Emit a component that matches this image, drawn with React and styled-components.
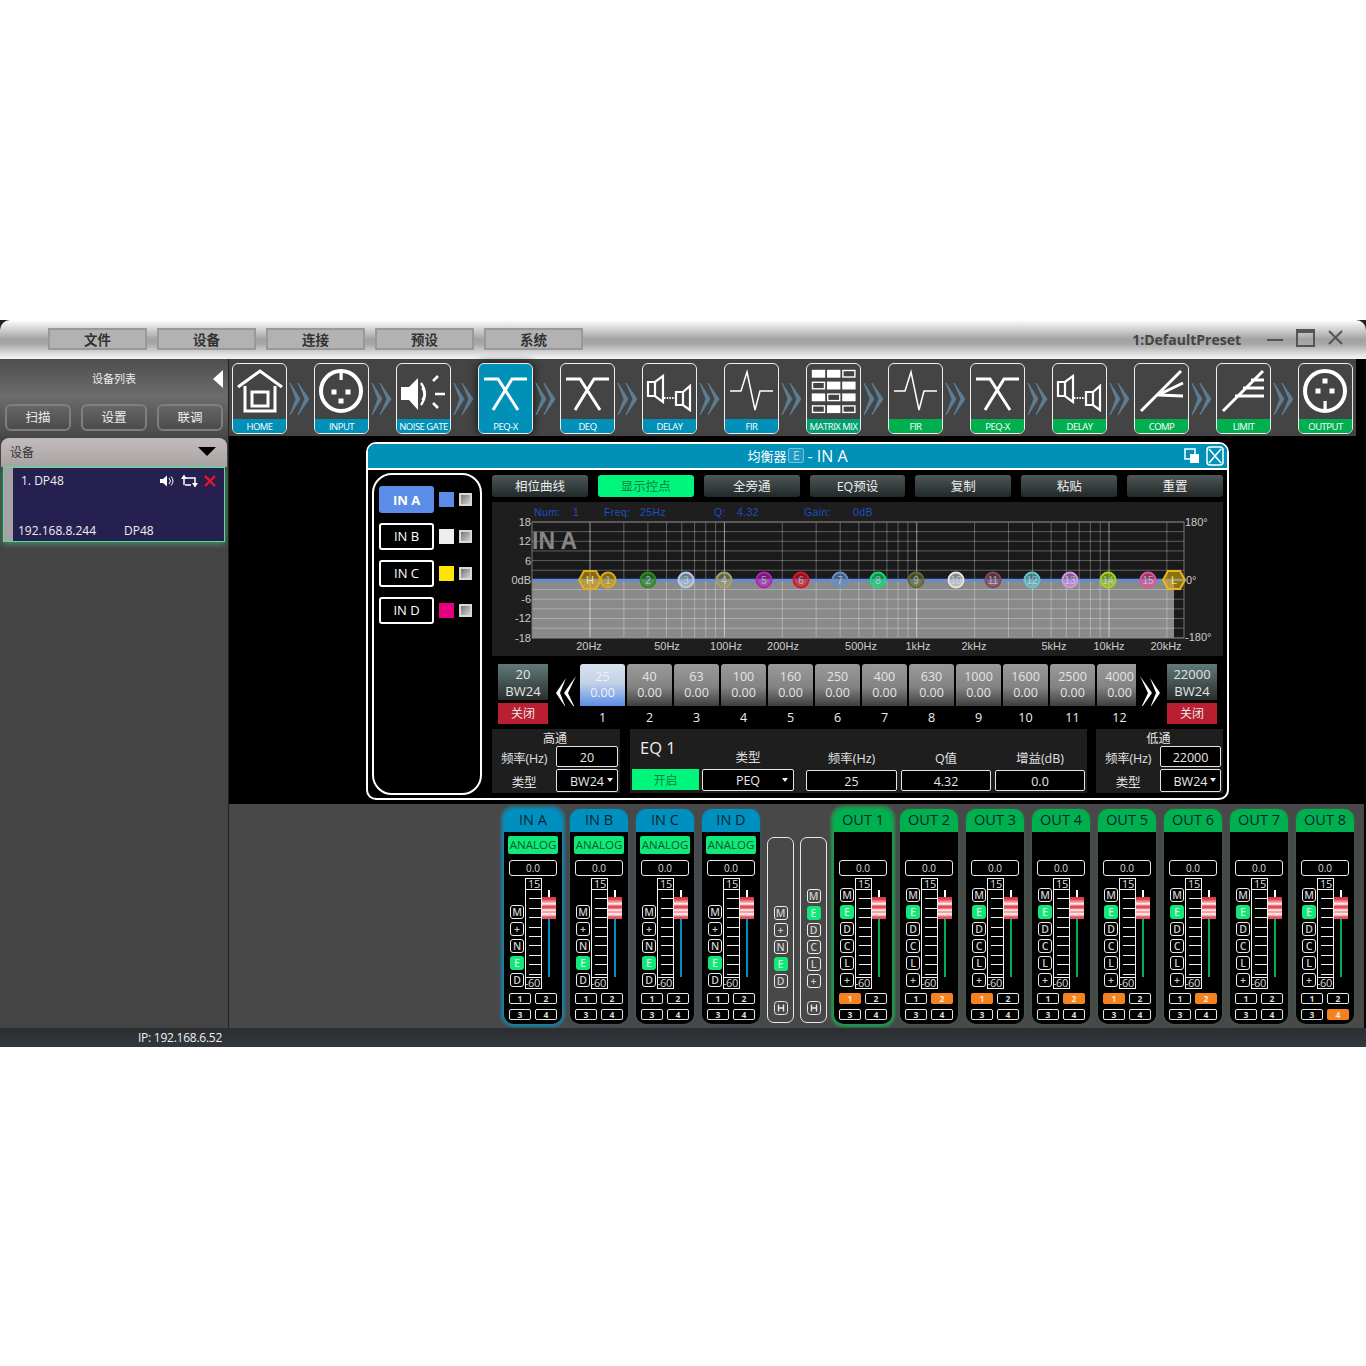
import React from 'react'
import styled, { createGlobalStyle } from 'styled-components'

const FONT = `"Open Sans", "Noto Sans CJK SC", sans-serif`
const BLUE = '#0090b8'
const GREEN = '#00b04f'

const GlobalStyle = createGlobalStyle`
    html, body { margin: 0; padding: 0; background: #fff; }
    body { font-family: ${FONT}; }
    * { box-sizing: border-box; }
`

const Page = styled.div`
    width: 1366px;
    height: 1366px;
    padding-top: 320px;
    background: #fff;
    overflow: hidden;
`
const Window = styled.div`
    width: 1366px;
    height: 727px;
    background: #222;
    display: flex;
    flex-direction: column;
`

/* title bar */
const TitleBar = styled.div`
    height: 39px;
    flex: none;
    display: flex;
    align-items: center;
    padding: 0 0 1px 48px;
    gap: 10px;
    border-radius: 10px 10px 0 0;
    background: linear-gradient(#fff 0%, #e8e8e8 12%, #a2a2a2 50%, #a8a8a8 62%, #e4e4e4 90%, #f4f4f4 100%);
`
const MenuButton = styled.div`
    width: 99px;
    height: 22px;
    border: 2px solid #999;
    background: #b2b2b2;
    color: #333;
    font-size: 13.5px;
    font-weight: 700;
    line-height: 20px;
    text-align: center;
`
const PresetName = styled.div`
    margin-left: auto;
    font-size: 14px;
    font-weight: 700;
    color: #444;
`
const WindowControls = styled.svg`
    width: 98px;
    height: 24px;
    margin-left: 16px;
    margin-right: 1px;
    flex: none;
`

const Body = styled.div`
    flex: 1;
    display: flex;
    min-height: 0;
`

/* left device list */
const Sidebar = styled.div`
    width: 228px;
    flex: none;
    background: #444;
    display: flex;
    flex-direction: column;
`
const SideHeader = styled.div`
    height: 39px;
    flex: none;
    display: flex;
    align-items: center;
    justify-content: center;
    position: relative;
    color: #eee;
    font-size: 11px;
    padding-bottom: 1px;
    background: linear-gradient(#4e4e4e, #6e6e6e);
`
const CollapseArrow = styled.div`
    position: absolute;
    right: 5px;
    top: 11px;
    border-style: solid;
    border-width: 9px 10px 9px 0;
    border-color: transparent #fff transparent transparent;
`
const SideButtons = styled.div`
    height: 39px;
    flex: none;
    display: flex;
    gap: 10px;
    padding: 6px 0 0 5px;
    background: linear-gradient(#6a6a6a, #484848);
`
const SideButton = styled.div`
    width: 66px;
    height: 27px;
    border: 2px solid #7e7e7e;
    border-radius: 6px;
    background: linear-gradient(#666, #4c4c4c);
    color: #eee;
    font-size: 12.5px;
    line-height: 24px;
    text-align: center;
`
const GroupHeader = styled.div`
    height: 29px;
    margin: 1px 1px 0;
    flex: none;
    display: flex;
    align-items: center;
    justify-content: space-between;
    padding: 0 11px 2px 9px;
    border-radius: 8px 8px 0 0;
    background: linear-gradient(#c2bcbc, #a8a2a2);
    color: #333;
    font-size: 12px;
`
const DownArrow = styled.div`
    border-style: solid;
    border-width: 9px 9px 0 9px;
    border-color: #000 transparent transparent transparent;
`
const DeviceCard = styled.div`
    height: 75px;
    margin: 0 3px;
    display: flex;
    border: 1px solid #4fe09a;
    box-shadow: 0 2px 6px rgba(90, 230, 160, 0.45);
`
const DeviceStrip = styled.div`
    width: 9px;
    flex: none;
    background: #a4a4a4;
`
const DeviceInfo = styled.div`
    flex: 1;
    background: #262050;
    color: #eee;
    font-size: 12px;
    display: flex;
    flex-direction: column;
    justify-content: space-between;
    padding: 4px 8px 2px 5px;
`
const DeviceTop = styled.div`
    display: flex;
    align-items: center;
    justify-content: space-between;
    padding-left: 3px;
`
const DeviceBottom = styled.div`
    display: flex;
    gap: 28px;
`

/* right side */
const Main = styled.div`
    flex: 1;
    min-width: 0;
    background: #000;
    display: flex;
    flex-direction: column;
    border-left: 1px solid #222;
    margin-left: 0;
`
const Toolbar = styled.div`
    width: 1127px;
    height: 77px;
    flex: none;
    background: #444;
    display: flex;
    padding: 4px 0 0 3px;
`
const Tile = styled.div`
    width: 55px;
    height: 71px;
    flex: none;
    display: flex;
    flex-direction: column;
    border: 1px solid #eee;
    border-radius: 6px;
    overflow: hidden;
    background: ${p => (p.$active ? BLUE : 'transparent')};
    box-shadow: ${p => (p.$active ? '0 0 8px #111' : 'none')};
`
const TileIcon = styled.svg`
    width: 55px;
    height: 55px;
    margin: -1px 0 0 -1px;
    flex: none;
`
const TileLabel = styled.div`
    height: 15px;
    margin-top: 1px;
    background: ${p => p.$color};
    color: #fff;
    font-size: 9.5px;
    letter-spacing: -0.5px;
    line-height: 15px;
    text-align: center;
    white-space: nowrap;
    overflow: hidden;
`
const ChevronBox = styled.svg`
    width: 27px;
    height: 71px;
    flex: none;
`

const Workspace = styled.div`
    height: 368px;
    flex: none;
    padding: 6px 0 0 137px;
`
const Dialog = styled.div`
    width: 863px;
    height: 358px;
    border: 2px solid #fff;
    border-radius: 10px;
    background: #000;
    display: flex;
    flex-direction: column;
    overflow: hidden;
`
const DialogTitle = styled.div`
    height: 26px;
    flex: none;
    border-bottom: 2px solid #fff;
    background: ${BLUE};
    display: flex;
    align-items: center;
    justify-content: center;
    position: relative;
    color: #fff;
    font-size: 16px;
    line-height: 22px;
    padding-bottom: 1px;
`
const DialogCn = styled.span`
    font-size: 13px;
`
const EBadge = styled.span`
    width: 16px;
    height: 15px;
    margin: 0 3px 0 2px;
    border: 1px solid #6cc4de;
    border-radius: 2px;
    background: #1c9cc0;
    color: #a8e0f0;
    font-size: 12px;
    line-height: 13px;
    text-align: center;
`
const DialogIcons = styled.svg`
    position: absolute;
    right: 1px;
    top: 1px;
    width: 42px;
    height: 22px;
`
const DialogBody = styled.div`
    flex: 1;
    display: flex;
    padding: 3px 0 0 4px;
    gap: 10px;
`
const ChannelPanel = styled.div`
    width: 110px;
    height: 322px;
    flex: none;
    border: 2px solid #fff;
    border-radius: 20px;
    padding: 11px 0 0 5px;
    display: flex;
    flex-direction: column;
    gap: 10px;
`
const ChannelRow = styled.div`
    display: flex;
    align-items: center;
`
const ChannelName = styled.div`
    width: 55px;
    height: 27px;
    border: ${p => (p.$active ? 'none' : '2px solid #fff')};
    border-radius: 3px;
    background: ${p => (p.$active ? '#5b8de8' : '#000')};
    color: #fff;
    font-size: 13px;
    font-weight: ${p => (p.$active ? 700 : 400)};
    line-height: ${p => (p.$active ? '28px' : '23px')};
    text-align: center;
`
const Swatch = styled.div`
    width: 15px;
    height: 15px;
    margin-left: 5px;
    background: ${p => p.$color};
`
const CheckBox = styled.div`
    width: 13px;
    height: 13px;
    margin-left: 5px;
    border: 2px solid #d8d8d8;
    background: linear-gradient(135deg, #777, #d0d0d0);
`
const RightColumn = styled.div`
    width: 731px;
    flex: none;
    padding-top: 2px;
    display: flex;
    flex-direction: column;
`
const ToolRow = styled.div`
    display: flex;
    gap: 10px;
    height: 22px;
    flex: none;
`
const ToolButton = styled.div`
    width: 96px;
    height: 22px;
    border-radius: 3px;
    background: ${p => (p.$on ? '#00f57c' : 'linear-gradient(#4c5757, #232828)')};
    color: ${p => (p.$on ? '#0a8040' : '#eee')};
    font-size: 12.5px;
    line-height: 23px;
    text-align: center;
`
const GraphPanel = styled.svg`
    width: 731px;
    height: 154px;
    margin-top: 5px;
    flex: none;
    background: #1e1e1e;
    display: block;
    text {
        font-family: "Liberation Sans", sans-serif;
    }
`

/* band row */
const BandRow = styled.div`
    height: 61px;
    margin-top: 8px;
    flex: none;
    display: flex;
    padding-left: 6px;
`
const FilterBlock = styled.div`
    width: 50px;
    flex: none;
    display: flex;
    flex-direction: column;
    gap: 3px;
`
const FilterValue = styled.div`
    height: 36px;
    background: linear-gradient(#607a78, #2a2e2e);
    color: #e4e4e4;
    font-size: 13px;
    line-height: 16.5px;
    padding-top: 2px;
    text-align: center;
`
const FilterOff = styled.div`
    height: 21px;
    background: #b91f30;
    color: #e8e8e8;
    font-size: 12px;
    line-height: 21px;
    text-align: center;
`
const PageArrow = styled.svg`
    width: ${p => p.$w}px;
    height: 42px;
    flex: none;
    position: relative;
`
const Bands = styled.div`
    width: 556px;
    flex: none;
    display: flex;
    gap: 2px;
`
const Band = styled.div`
    width: 45px;
    flex: none;
    text-align: center;
    &:last-child {
        margin-right: -6px;
    }
`
const BandCard = styled.div`
    height: 42px;
    border-radius: 3px 3px 0 0;
    padding-top: 5px;
    font-size: 12.5px;
    line-height: 16px;
    color: ${p => (p.$active ? '#eef3fb' : '#e4e4e4')};
    background: ${p =>
        p.$active
            ? 'linear-gradient(#d8e2ee, #c4d2e6 45%, #5b8de8)'
            : 'linear-gradient(#9a9a9a, #838383 55%, #3e3e3e)'};
    ${Band}:last-child & {
        background-size: 39px 100%;
        background-repeat: no-repeat;
    }
`
const BandNumber = styled.div`
    margin-top: 3px;
    color: #eee;
    font-size: 12.5px;
    line-height: 17px;
`

/* bottom parameter row */
const ParamRow = styled.div`
    height: 64px;
    margin-top: 4px;
    flex: none;
    display: flex;
`
const PassPanel = styled.div`
    width: ${p => p.$w}px;
    margin-right: ${p => p.$mr}px;
    flex: none;
    background: #1e1e1e;
    padding-right: 2px;
`
const PassTitle = styled.div`
    height: 17px;
    color: #e8e8e8;
    font-size: 12px;
    line-height: 19px;
    text-align: center;
`
const PassLine = styled.div`
    display: flex;
    align-items: center;
    margin-bottom: 2px;
`
const PassLabel = styled.div`
    width: 64px;
    flex: none;
    color: #e0e0e0;
    font-size: 12.5px;
    padding-top: 1px;
    white-space: nowrap;
    letter-spacing: -0.2px;
    text-align: center;
`
const Field = styled.div`
    height: ${p => p.$h || 21}px;
    width: ${p => p.$w}px;
    flex: none;
    border: 1px solid #e4e4e4;
    border-radius: 2px;
    background: #000;
    color: #e8e8e8;
    font-size: 12.5px;
    line-height: ${p => p.$h || 21}px;
    text-align: center;
    position: relative;
`
const SelectField = styled(Field)`
    &::after {
        content: '';
        position: absolute;
        right: ${p => p.$caret}px;
        top: 8px;
        border-style: solid;
        border-width: 4px 3.5px 0 3.5px;
        border-color: #eee transparent transparent transparent;
    }
`
const EqPanel = styled.div`
    width: 457px;
    margin-right: 9px;
    flex: none;
    background: #1e1e1e;
    display: flex;
    padding: 0 0 2px 2px;
`
const EqColumn = styled.div`
    width: ${p => p.$w}px;
    margin-right: ${p => p.$mr}px;
    flex: none;
    display: flex;
    flex-direction: column;
    justify-content: flex-end;
`
const EqTitle = styled.div`
    color: #eee;
    font-size: 16.5px;
    line-height: 22px;
    padding-left: 8px;
    margin-bottom: 10px;
`
const EqLabel = styled.div`
    color: #e0e0e0;
    font-size: 12.5px;
    line-height: 17px;
    margin-bottom: 3px;
    text-align: center;
`
const EqToggle = styled.div`
    height: 21px;
    margin-bottom: 1px;
    background: #00f57c;
    color: #0a8040;
    font-size: 12px;
    line-height: 23px;
    text-align: center;
`

/* mixer */
const Mixer = styled.div`
    width: 1135px;
    height: 224px;
    flex: none;
    background: #484848;
    display: flex;
    padding: 5px 0 0 275px;
`
const Strip = styled.div`
    width: 58px;
    height: 215px;
    margin-right: ${p => p.$mr}px;
    flex: none;
    display: flex;
    flex-direction: column;
    border-radius: 10px;
    box-shadow: ${p => (p.$selected ? `0 0 3px 3px ${p.$glow}` : `0 0 2px 1px ${p.$glow}44`)};
`
const StripHead = styled.div`
    height: 23px;
    flex: none;
    border-radius: 10px 10px 0 0;
    background: ${p => p.$color};
    color: #06262e;
    font-size: 14.5px;
    line-height: 21px;
    text-align: center;
`
const StripBody = styled.div`
    flex: 1;
    background: #000;
    border-radius: 0 0 10px 10px;
    display: flex;
    flex-direction: column;
    padding-top: 4px;
`
const SourceTag = styled.div`
    width: 50px;
    height: 18px;
    margin-left: 4px;
    flex: none;
    border-radius: 2px;
    background: ${p => (p.$empty ? 'transparent' : '#10e878')};
    color: #0a5a30;
    font-size: 11.5px;
    line-height: 18px;
    text-align: center;
`
const GainBox = styled.div`
    width: 48px;
    height: 16px;
    margin: 6px 0 0 5px;
    flex: none;
    border: 1px solid #e8e8e8;
    border-radius: 3px;
    color: #ddd;
    font-size: 10px;
    line-height: 14px;
    text-align: center;
`
const FaderRow = styled.div`
    height: 111px;
    margin-top: 2px;
    padding-left: 6px;
    flex: none;
    display: flex;
`
const KeyColumn = styled.div`
    width: 15px;
    flex: none;
    display: flex;
    flex-direction: column;
    justify-content: flex-end;
    gap: 3px;
    padding-bottom: 2px;
`
const Key = styled.div`
    width: 14px;
    height: 14px;
    flex: none;
    border: ${p => (p.$on ? 'none' : '1px solid #eee')};
    border-radius: 3px;
    background: ${p => (p.$on ? '#10e878' : 'transparent')};
    color: ${p => (p.$on ? '#c8f5dc' : '#ccc')};
    font-size: 10.5px;
    font-weight: 600;
    line-height: ${p => (p.$on ? '14px' : '12px')};
    text-align: center;
`
const Scale = styled.div`
    width: 17px;
    height: 111px;
    flex: none;
    border: 1px solid #f4f4f4;
    display: flex;
    flex-direction: column;
`
const ScaleEnd = styled.div`
    height: ${p => p.$h}px;
    flex: none;
    display: flex;
    justify-content: flex-end;
    color: #ddd;
    font-size: 11px;
    letter-spacing: -0.3px;
    line-height: ${p => p.$h}px;
    white-space: nowrap;
    padding-right: 1px;
`
const ScaleTicks = styled.div`
    flex: 1;
    border-top: 1px solid #f4f4f4;
    border-bottom: 1px solid #f4f4f4;
    background: repeating-linear-gradient(#000 0, #000 8.4px, #eee 8.4px, #eee 9.4px) right 0 top 0 / 12px 100% no-repeat;
`
const FaderSlot = styled.div`
    width: 14px;
    flex: none;
    position: relative;
`
const Track = styled.div`
    width: 2px;
    height: 87px;
    margin: 12px 0 0 6px;
    background: linear-gradient(#fff 0 8px, ${p => p.$color} 8px);
`
const Thumb = styled.div`
    position: absolute;
    left: 0;
    top: 19px;
    width: 14px;
    height: 22px;
    background: linear-gradient(#d83a48 0 2px, #f59aa0 5px, #fff 7px, #e84858 9px, #e84858 11px, #fff 13px, #f08088 15px, #fff 17px, #e85060 20px);
`
const RouteGrid = styled.div`
    margin: 4px 0 0 5px;
    display: grid;
    grid-template-columns: 22px 22px;
    column-gap: 4px;
    row-gap: 5px;
`
const RouteButton = styled.div`
    height: 11px;
    border: ${p => (p.$on ? 'none' : '1px solid #e8e8e8')};
    border-radius: 2px;
    background: ${p => (p.$on ? '#f58220' : 'transparent')};
    color: ${p => (p.$on ? '#fde8d0' : '#ddd')};
    font-size: 8.5px;
    font-weight: 700;
    line-height: ${p => (p.$on ? '11px' : '9px')};
    text-align: center;
`
const GroupPanel = styled.div`
    width: 27px;
    height: 186px;
    margin: 28px ${p => p.$mr}px 0 0;
    flex: none;
    border: 1px solid #e8e8e8;
    border-radius: 7px;
    display: flex;
    flex-direction: column;
    align-items: center;
    gap: 3px;
    padding: ${p => p.$top}px 0 7px;
`
const GroupPause = styled.svg`
    width: 14px;
    height: 14px;
    flex: none;
    margin-top: auto;
`

const StatusBar = styled.div`
    height: 19px;
    flex: none;
    background: linear-gradient(#2a2e32, #33383c);
    color: #eee;
    font-size: 12px;
    letter-spacing: -0.25px;
    line-height: 19px;
    padding-left: 138px;
    white-space: nowrap;
`

/* toolbar drawings */
const I = { fill: 'none', stroke: '#fff', strokeWidth: 3 }
const ICONS = {
    home: (
        <g {...I}>
            <path d="M6 24 L28 8 L50 24" />
            <path d="M13 23 V48 H43 V23" />
            <rect x="20" y="29" width="16" height="14" />
        </g>
    ),
    input: (
        <g fill="#fff">
            <circle cx="27" cy="28" r="20" fill="none" stroke="#fff" strokeWidth="4" />
            <rect x="25.5" y="7" width="3.2" height="10" />
            <rect x="17.5" y="26.5" width="5" height="5" />
            <rect x="31.5" y="26.5" width="5" height="5" />
            <rect x="24.5" y="35.5" width="5" height="5" />
        </g>
    ),
    output: (
        <g fill="#fff">
            <circle cx="27" cy="28" r="20" fill="none" stroke="#fff" strokeWidth="4" />
            <rect x="25.5" y="38" width="3.2" height="10" />
            <rect x="24.5" y="15.5" width="5" height="5" />
            <rect x="17.5" y="25.5" width="5" height="5" />
            <rect x="31.5" y="25.5" width="5" height="5" />
        </g>
    ),
    gate: (
        <g>
            <path d="M5 24 H13 L22 15 V47 L13 37 H5 Z" fill="#fff" />
            <path d="M25 20 Q33 31 25 42" fill="none" stroke="#fff" strokeWidth="2.2" />
            <path d="M26 25 Q30 31 26 37" fill="none" stroke="#fff" strokeWidth="1.5" />
            <path d="M37 18 L42 13 M39 31 H49 M37 40 L42 45" fill="none" stroke="#fff" strokeWidth="2.5" />
        </g>
    ),
    peq: (
        <g fill="none" stroke="#fff" strokeWidth="3">
            <path d="M6 16 H20 L40 47" />
            <path d="M49 16 H34 L15 47" />
        </g>
    ),
    delay: (
        <g fill="none" stroke="#fff" strokeWidth="2.2">
            <path d="M6 19 H13 L21 13 V39 L13 33 H6 Z" />
            <path d="M13 19 V33" />
            <path d="M22 35 H33" strokeDasharray="1.5 1.2" />
            <path d="M34 29 H41 L48 23 V47 L41 42 H34 Z" />
            <path d="M41 29 V42" />
        </g>
    ),
    fir: (
        <path d="M6 28 H17 L23 9 L31 47 L36 28 H49" fill="none" stroke="#fff" strokeWidth="1.5" />
    ),
    matrix: (
        <g>
            {[
                [1, 1, 0],
                [0, 1, 1],
                [1, 0, 1],
                [0, 1, 0],
            ].map((row, r) =>
                row.map((on, c) => (
                    <rect
                        key={`${r}-${c}`}
                        x={6.5 + c * 15.2}
                        y={7.5 + r * 11.8}
                        width="12"
                        height="6.5"
                        fill={on ? '#fff' : 'none'}
                        stroke="#fff"
                        strokeWidth="1.4"
                    />
                ))
            )}
        </g>
    ),
    comp: (
        <path d="M7 48 L47 8 M24 32 L49 20 M24 32 L49 33" fill="none" stroke="#fff" strokeWidth="3" />
    ),
    limit: (
        <path d="M7 48 L47 8 M35 17 H48 M27 25 H48 M19 33 H48" fill="none" stroke="#fff" strokeWidth="3" />
    ),
}
const TILES = [
    ['home', 'HOME', BLUE],
    ['input', 'INPUT', BLUE],
    ['gate', 'NOISE GATE', BLUE],
    ['peq', 'PEQ-X', BLUE, true],
    ['peq', 'DEQ', BLUE],
    ['delay', 'DELAY', BLUE],
    ['fir', 'FIR', BLUE],
    ['matrix', 'MATRIX MIX', '#00a070'],
    ['fir', 'FIR', GREEN],
    ['peq', 'PEQ-X', GREEN],
    ['delay', 'DELAY', GREEN],
    ['comp', 'COMP', GREEN],
    ['limit', 'LIMIT', GREEN],
    ['output', 'OUTPUT', GREEN],
]

/* graph: plot is drawn in panel coordinates (panel starts at 492,502) */
const fx = f => 98 + 192.3 * Math.log10(f / 20)
const FREQS = []
;[10, 100, 1000].forEach(d => {
    for (let i = 1; i <= 9; i++) {
        const f = d * (i + 1)
        if (f >= 20) FREQS.push(f)
    }
})
FREQS.push(20000)
const HLINES = Array.from({ length: 13 }, (_, i) => 20 + i * 9.65)
const NODES = [
    ['1', 116, '#d8aa18'],
    ['2', 156, '#2f8a22'],
    ['3', 194, '#b6cce6'],
    ['4', 232, '#a3a06c'],
    ['5', 272, '#b422b4'],
    ['6', 309, '#e01428'],
    ['7', 348, '#6690c0'],
    ['8', 386, '#10dc74'],
    ['9', 424, '#64682e'],
    ['10', 464, '#e4e4e4'],
    ['11', 501, '#84485a'],
    ['12', 540, '#66c4c8'],
    ['13', 578, '#d494e4'],
    ['14', 616, '#a4d41c'],
    ['15', 656, '#e4549c'],
]
const hexagon = (cx, cy) =>
    [[-11, 0], [-6, -9], [6, -9], [11, 0], [6, 9], [-6, 9]].map(([x, y]) => `${cx + x},${cy + y}`).join(' ')

function Graph() {
    const axis = [['18', 20], ['12', 39], ['6', 58.5], ['0dB', 78], ['-6', 97], ['-12', 116], ['-18', 135.5]]
    const xLabels = [['20Hz', 97], ['50Hz', 175], ['100Hz', 234], ['200Hz', 291], ['500Hz', 369], ['1kHz', 426], ['2kHz', 482], ['5kHz', 562], ['10kHz', 617], ['20kHz', 674]]
    const readout = [['Num:', 42], ['1', 81], ['Freq:', 112], ['25Hz', 148], ['Q:', 222], ['4.32', 245], ['Gain:', 312], ['0dB', 361]]
    return (
        <GraphPanel viewBox="0 0 731 154">
            <rect x="40" y="20" width="652" height="116" fill="#1a1a1a" />
            <rect x="40" y="78" width="642" height="58" fill="#8a8a8a" />
            {HLINES.map(y => (
                <line key={y} x1="40" x2="692" y1={y} y2={y} stroke="#fff" strokeOpacity="0.3" />
            ))}
            {FREQS.map(f => (
                <line
                    key={f}
                    x1={fx(f)}
                    x2={fx(f)}
                    y1="20"
                    y2="136"
                    stroke="#fff"
                    strokeOpacity={[20, 100, 1000, 10000].includes(f) ? 0.55 : 0.3}
                />
            ))}
            <rect x="40" y="20" width="652" height="116" fill="none" stroke="#777" />
            <line x1="40" x2="692" y1="78" y2="78" stroke="#5b8de8" strokeWidth="2.5" />
            {readout.map(([t, x]) => (
                <text key={t} x={x} y="14" fontSize="10.5" fill="#1f4fc0" letterSpacing="0.4">{t}</text>
            ))}
            <text x="40" y="47" fontSize="23" fontWeight="700" fill="#868686">IN A</text>
            {axis.map(([t, y]) => (
                <text key={t} x="39" y={y + 4} fontSize="11" fill="#ccc" textAnchor="end">{t}</text>
            ))}
            {xLabels.map(([t, x]) => (
                <text key={t} x={x} y="148" fontSize="11" fill="#ccc" textAnchor="middle">{t}</text>
            ))}
            <text x="693" y="24" fontSize="11" fill="#ccc">180°</text>
            <text x="694" y="82" fontSize="11" fill="#ccc">0°</text>
            <text x="693" y="139" fontSize="11" fill="#ccc">-180°</text>
            {NODES.map(([label, x, color]) => (
                <g key={label}>
                    <circle cx={x} cy="78" r="7.5" fill={color} fillOpacity="0.55" stroke={color} strokeWidth="2" />
                    <text x={x} y="81.5" fontSize="10" fill="#e8e8e8" fillOpacity="0.6" textAnchor="middle">{label}</text>
                </g>
            ))}
            <polygon points={hexagon(98, 78)} fill="#d8aa18" fillOpacity="0.55" stroke="#e0b018" strokeWidth="2" />
            <text x="98" y="82" fontSize="11" fill="#f0e090" textAnchor="middle">H</text>
            <polygon points={hexagon(682, 78)} fill="#d8aa18" fillOpacity="0.6" stroke="#e8b818" strokeWidth="2" />
            <text x="682" y="82" fontSize="11" fill="#f0e090" textAnchor="middle">L</text>
        </GraphPanel>
    )
}

const BANDS = ['25', '40', '63', '100', '160', '250', '400', '630', '1000', '1600', '2500', '4000']
const IN_KEYS = ['M', '+', 'N', 'E', 'D']
const OUT_KEYS = ['M', 'E', 'D', 'C', 'L', '+']

function ChannelStrip({ name, color, glow, keys, analog, route, selected, mr = 8 }) {
    return (
        <Strip $mr={mr} $selected={selected} $glow={glow}>
            <StripHead $color={color}>{name}</StripHead>
            <StripBody>
                <SourceTag $empty={!analog}>{analog ? 'ANALOG' : ''}</SourceTag>
                <GainBox>0.0</GainBox>
                <FaderRow>
                    <KeyColumn>
                        {keys.map(k => (
                            <Key key={k} $on={k === 'E'}>{k}</Key>
                        ))}
                    </KeyColumn>
                    <Scale>
                        <ScaleEnd $h={10}>15</ScaleEnd>
                        <ScaleTicks />
                        <ScaleEnd $h={10}>-60</ScaleEnd>
                    </Scale>
                    <FaderSlot>
                        <Track $color={color} />
                        <Thumb />
                    </FaderSlot>
                </FaderRow>
                <RouteGrid>
                    {[1, 2, 3, 4].map(n => (
                        <RouteButton key={n} $on={route === n}>{n}</RouteButton>
                    ))}
                </RouteGrid>
            </StripBody>
        </Strip>
    )
}

function Group({ keys, top, mr }) {
    return (
        <GroupPanel $top={top} $mr={mr}>
            {keys.map(k => (
                <Key key={k} $on={k === 'E'}>{k}</Key>
            ))}
            <GroupPause viewBox="0 0 14 14">
                <rect x="0.5" y="0.5" width="13" height="13" rx="3" fill="none" stroke="#e8e8e8" />
                <path d="M4.5 3.5 V10.5 M9.5 3.5 V10.5 M4.5 7 H9.5" stroke="#e8e8e8" strokeWidth="1.4" fill="none" />
            </GroupPause>
        </GroupPanel>
    )
}

export default function App() {
    return (
        <Page>
            <GlobalStyle />
            <Window>
                <TitleBar>
                    {['文件', '设备', '连接', '预设', '系统'].map(m => (
                        <MenuButton key={m}>{m}</MenuButton>
                    ))}
                    <PresetName>1:DefaultPreset</PresetName>
                    <WindowControls viewBox="0 0 98 24">
                        <rect x="0" y="12" width="16" height="2" fill="#555" />
                        <rect x="30" y="3" width="17" height="16" fill="none" stroke="#555" strokeWidth="2" />
                        <rect x="30" y="2" width="17" height="4" fill="#555" />
                        <path d="M62 4 L75 17 M75 4 L62 17" stroke="#555" strokeWidth="2" />
                    </WindowControls>
                </TitleBar>
                <Body>
                    <Sidebar>
                        <SideHeader>
                            设备列表
                            <CollapseArrow />
                        </SideHeader>
                        <SideButtons>
                            <SideButton>扫描</SideButton>
                            <SideButton>设置</SideButton>
                            <SideButton>联调</SideButton>
                        </SideButtons>
                        <GroupHeader>
                            设备
                            <DownArrow />
                        </GroupHeader>
                        <DeviceCard>
                            <DeviceStrip />
                            <DeviceInfo>
                                <DeviceTop>
                                    <span>1. DP48</span>
                                    <svg width="58" height="14" viewBox="0 0 58 14">
                                        <path d="M2 5 H5 L9 1.5 V12.5 L5 9 H2 Z" fill="#fff" />
                                        <path d="M11 4 Q14 7 11 10 M13 2.5 Q17 7 13 11.5" fill="none" stroke="#fff" />
                                        <path d="M26 11 V4 H37 V11 M27 11 H33" fill="none" stroke="#fff" strokeWidth="1.5" />
                                        <path d="M26 0.5 L23 5 H29 Z M37 13.5 L34 9 H40 Z" fill="#fff" />
                                        <path d="M47 2 L57 12 M57 2 L47 12" stroke="#e8182c" strokeWidth="2.4" />
                                    </svg>
                                </DeviceTop>
                                <DeviceBottom>
                                    <span>192.168.8.244</span>
                                    <span>DP48</span>
                                </DeviceBottom>
                            </DeviceInfo>
                        </DeviceCard>
                    </Sidebar>
                    <Main>
                        <Toolbar>
                            {TILES.map(([icon, label, color, active], i) => (
                                <React.Fragment key={i}>
                                    <Tile $active={active}>
                                        <TileIcon viewBox="0 0 55 55">{ICONS[icon]}</TileIcon>
                                        <TileLabel $color={color}>{label}</TileLabel>
                                    </Tile>
                                    {i < TILES.length - 1 && (
                                        <ChevronBox viewBox="0 0 27 71">
                                            <path d="M3 20 L13 36 L3 52 L9 36 Z M11 20 L22 36 L11 52 L18 36 Z" fill="#5c7d94" stroke="#5c7d94" />
                                        </ChevronBox>
                                    )}
                                </React.Fragment>
                            ))}
                        </Toolbar>
                        <Workspace>
                            <Dialog>
                                <DialogTitle>
                                    <DialogCn>均衡器</DialogCn>
                                    <EBadge>E</EBadge>
                                    - IN A
                                    <DialogIcons viewBox="0 0 42 22">
                                        <rect x="1" y="4" width="10" height="10" fill="none" stroke="#fff" strokeWidth="1.5" />
                                        <rect x="6" y="9" width="9" height="9" fill="#fff" />
                                        <rect x="23" y="2" width="16" height="18" rx="3" fill="none" stroke="#fff" strokeWidth="1.5" />
                                        <path d="M25 4 L37 18 M37 4 L25 18" stroke="#fff" strokeWidth="1.6" />
                                    </DialogIcons>
                                </DialogTitle>
                                <DialogBody>
                                    <ChannelPanel>
                                        {[['IN A', '#5b8de8'], ['IN B', '#eeeeee'], ['IN C', '#ffe600'], ['IN D', '#e6007e']].map(([n, c], i) => (
                                            <ChannelRow key={n}>
                                                <ChannelName $active={i === 0}>{n}</ChannelName>
                                                <Swatch $color={c} />
                                                <CheckBox />
                                            </ChannelRow>
                                        ))}
                                    </ChannelPanel>
                                    <RightColumn>
                                        <ToolRow>
                                            {['相位曲线', '显示控点', '全旁通', 'EQ预设', '复制', '粘贴', '重置'].map((t, i) => (
                                                <ToolButton key={t} $on={i === 1}>{t}</ToolButton>
                                            ))}
                                        </ToolRow>
                                        <Graph />
                                        <BandRow>
                                            <FilterBlock>
                                                <FilterValue>20<br />BW24</FilterValue>
                                                <FilterOff>关闭</FilterOff>
                                            </FilterBlock>
                                            <PageArrow $w={32} viewBox="0 0 32 42">
                                                <path d="M18 14 L8 29 L18 44 L12 29 Z M28 12 L16 29 L28 46 L20 29 Z" fill="#fff" />
                                            </PageArrow>
                                            <Bands>
                                                {BANDS.map((b, i) => (
                                                    <Band key={b}>
                                                        <BandCard $active={i === 0}>{b}<br />0.00</BandCard>
                                                        <BandNumber>{i + 1}</BandNumber>
                                                    </Band>
                                                ))}
                                            </Bands>
                                            <PageArrow $w={31} viewBox="0 0 31 42">
                                                <path d="M4 12 L16 29 L4 46 L12 29 Z M14 14 L24 29 L14 44 L20 29 Z" fill="#fff" />
                                            </PageArrow>
                                            <FilterBlock>
                                                <FilterValue>22000<br />BW24</FilterValue>
                                                <FilterOff>关闭</FilterOff>
                                            </FilterBlock>
                                        </BandRow>
                                        <ParamRow>
                                            <PassPanel $w={128} $mr={10}>
                                                <PassTitle>高通</PassTitle>
                                                <PassLine>
                                                    <PassLabel>频率(Hz)</PassLabel>
                                                    <Field $w={62}>20</Field>
                                                </PassLine>
                                                <PassLine>
                                                    <PassLabel>类型</PassLabel>
                                                    <SelectField $w={62} $h={23} $caret={4}>BW24</SelectField>
                                                </PassLine>
                                            </PassPanel>
                                            <EqPanel>
                                                <EqColumn $w={67} $mr={3}>
                                                    <EqTitle>EQ 1</EqTitle>
                                                    <EqToggle>开启</EqToggle>
                                                </EqColumn>
                                                <EqColumn $w={92} $mr={12}>
                                                    <EqLabel>类型</EqLabel>
                                                    <SelectField $w={92} $h={22} $caret={5}>PEQ</SelectField>
                                                </EqColumn>
                                                <EqColumn $w={91} $mr={4}>
                                                    <EqLabel>频率(Hz)</EqLabel>
                                                    <Field $w={91}>25</Field>
                                                </EqColumn>
                                                <EqColumn $w={90} $mr={4}>
                                                    <EqLabel>Q值</EqLabel>
                                                    <Field $w={90}>4.32</Field>
                                                </EqColumn>
                                                <EqColumn $w={90} $mr={0}>
                                                    <EqLabel>增益(dB)</EqLabel>
                                                    <Field $w={90}>0.0</Field>
                                                </EqColumn>
                                            </EqPanel>
                                            <PassPanel $w={127} $mr={0}>
                                                <PassTitle>低通</PassTitle>
                                                <PassLine>
                                                    <PassLabel>频率(Hz)</PassLabel>
                                                    <Field $w={61}>22000</Field>
                                                </PassLine>
                                                <PassLine>
                                                    <PassLabel>类型</PassLabel>
                                                    <SelectField $w={61} $h={23} $caret={4}>BW24</SelectField>
                                                </PassLine>
                                            </PassPanel>
                                        </ParamRow>
                                    </RightColumn>
                                </DialogBody>
                            </Dialog>
                        </Workspace>
                        <Mixer>
                            {['IN A', 'IN B', 'IN C', 'IN D'].map((n, i) => (
                                <ChannelStrip
                                    key={n}
                                    name={n}
                                    color="#0090c0"
                                    glow="#1a7f9f"
                                    keys={IN_KEYS}
                                    analog
                                    selected={i === 0}
                                    mr={i === 3 ? 7 : 8}
                                />
                            ))}
                            <Group keys={IN_KEYS} top={68} mr={6} />
                            <Group keys={OUT_KEYS} top={51} mr={7} />
                            {[1, 2, 1, 2, 1, 2, 0, 4].map((r, i) => (
                                <ChannelStrip
                                    key={i}
                                    name={`OUT ${i + 1}`}
                                    color={GREEN}
                                    glow="#1f9a50"
                                    keys={OUT_KEYS}
                                    route={r}
                                    selected={i === 0}
                                />
                            ))}
                        </Mixer>
                    </Main>
                </Body>
                <StatusBar>IP: 192.168.6.52</StatusBar>
            </Window>
        </Page>
    )
}
